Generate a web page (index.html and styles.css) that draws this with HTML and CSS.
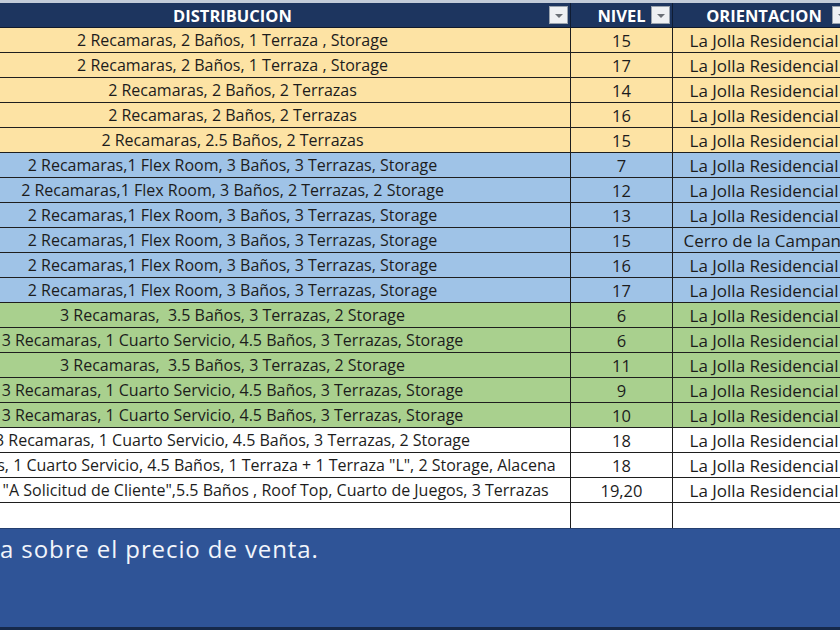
FILE: index.html
```html
<!DOCTYPE html>
<html lang="es">
<head>
<meta charset="utf-8">
<title>Distribucion</title>
<link rel="stylesheet" href="styles.css">
</head>
<body>
<div class="sheet">
  <div class="topline"></div>
  <div class="table">
    <div class="row head">
      <div class="cell c1"><span>DISTRIBUCION</span><i class="dd"></i></div>
      <div class="cell c2"><span>NIVEL</span><i class="dd"></i></div>
      <div class="cell c3"><span>ORIENTACION</span><i class="dd"></i></div>
    </div>
    <div class="row y"><div class="cell c1">2 Recamaras, 2 Baños, 1 Terraza , Storage</div><div class="cell c2">15</div><div class="cell c3">La Jolla Residencial</div></div>
    <div class="row y"><div class="cell c1">2 Recamaras, 2 Baños, 1 Terraza , Storage</div><div class="cell c2">17</div><div class="cell c3">La Jolla Residencial</div></div>
    <div class="row y"><div class="cell c1">2 Recamaras, 2 Baños, 2 Terrazas</div><div class="cell c2">14</div><div class="cell c3">La Jolla Residencial</div></div>
    <div class="row y"><div class="cell c1">2 Recamaras, 2 Baños, 2 Terrazas</div><div class="cell c2">16</div><div class="cell c3">La Jolla Residencial</div></div>
    <div class="row y"><div class="cell c1">2 Recamaras, 2.5 Baños, 2 Terrazas</div><div class="cell c2">15</div><div class="cell c3">La Jolla Residencial</div></div>
    <div class="row b"><div class="cell c1">2 Recamaras,1 Flex Room, 3 Baños, 3 Terrazas, Storage</div><div class="cell c2">7</div><div class="cell c3">La Jolla Residencial</div></div>
    <div class="row b"><div class="cell c1">2 Recamaras,1 Flex Room, 3 Baños, 2 Terrazas, 2 Storage</div><div class="cell c2">12</div><div class="cell c3">La Jolla Residencial</div></div>
    <div class="row b"><div class="cell c1">2 Recamaras,1 Flex Room, 3 Baños, 3 Terrazas, Storage</div><div class="cell c2">13</div><div class="cell c3">La Jolla Residencial</div></div>
    <div class="row b"><div class="cell c1">2 Recamaras,1 Flex Room, 3 Baños, 3 Terrazas, Storage</div><div class="cell c2">15</div><div class="cell c3 nudge">Cerro de la Campana</div></div>
    <div class="row b"><div class="cell c1">2 Recamaras,1 Flex Room, 3 Baños, 3 Terrazas, Storage</div><div class="cell c2">16</div><div class="cell c3">La Jolla Residencial</div></div>
    <div class="row b"><div class="cell c1">2 Recamaras,1 Flex Room, 3 Baños, 3 Terrazas, Storage</div><div class="cell c2">17</div><div class="cell c3">La Jolla Residencial</div></div>
    <div class="row g"><div class="cell c1">3 Recamaras,&nbsp; 3.5 Baños, 3 Terrazas, 2 Storage</div><div class="cell c2">6</div><div class="cell c3">La Jolla Residencial</div></div>
    <div class="row g"><div class="cell c1">3 Recamaras, 1 Cuarto Servicio, 4.5 Baños, 3 Terrazas, Storage</div><div class="cell c2">6</div><div class="cell c3">La Jolla Residencial</div></div>
    <div class="row g"><div class="cell c1">3 Recamaras,&nbsp; 3.5 Baños, 3 Terrazas, 2 Storage</div><div class="cell c2">11</div><div class="cell c3">La Jolla Residencial</div></div>
    <div class="row g"><div class="cell c1">3 Recamaras, 1 Cuarto Servicio, 4.5 Baños, 3 Terrazas, Storage</div><div class="cell c2">9</div><div class="cell c3">La Jolla Residencial</div></div>
    <div class="row g"><div class="cell c1">3 Recamaras, 1 Cuarto Servicio, 4.5 Baños, 3 Terrazas, Storage</div><div class="cell c2">10</div><div class="cell c3">La Jolla Residencial</div></div>
    <div class="row w"><div class="cell c1">3 Recamaras, 1 Cuarto Servicio, 4.5 Baños, 3 Terrazas, 2 Storage</div><div class="cell c2">18</div><div class="cell c3">La Jolla Residencial</div></div>
    <div class="row w"><div class="cell c1">3 Recamaras, 1 Cuarto Servicio, 4.5 Baños, 1 Terraza + 1 Terraza "L", 2 Storage, Alacena</div><div class="cell c2">18</div><div class="cell c3">La Jolla Residencial</div></div>
    <div class="row w"><div class="cell c1">Recamaras "A Solicitud de Cliente",5.5 Baños , Roof Top, Cuarto de Juegos, 3 Terrazas</div><div class="cell c2">19,20</div><div class="cell c3">La Jolla Residencial</div></div>
    <div class="row w empty"><div class="cell c1"></div><div class="cell c2"></div><div class="cell c3"></div></div>
  </div>
  <div class="footer">
    <p class="note">a sobre el precio de venta.</p>
  </div>
</div>
</body>
</html>
```

FILE: styles.css
```css
html, body {
  margin: 0;
  padding: 0;
  background: #ffffff;
}
.sheet {
  width: 840px;
  height: 630px;
  overflow: hidden;
  font-family: "Open Sans", "Noto Sans", sans-serif;
  display: flex;
  flex-direction: column;
}
.topline {
  height: 3px;
  background: #c3ccd9;
  flex: none;
}
.table {
  margin-left: -105px;
  flex: none;
}
.row {
  display: grid;
  grid-template-columns: 676px 102px 182px;
  height: 25px;
  box-sizing: border-box;
  border-bottom: 1px solid #1e1e1e;
}
.cell {
  box-sizing: border-box;
  border-right: 1px solid #1e1e1e;
  display: flex;
  align-items: center;
  justify-content: center;
  white-space: nowrap;
  font-size: 16px;
  color: #1c1c1c;
}
.c2 { font-size: 16.5px; }
.c3 { border-right: none; font-size: 17px; }
.c3.nudge { padding-left: 6px; }
.head {
  background: #1d355f;
  border-bottom: 1px solid #111a2c;
}
.head .cell {
  color: #ffffff;
  font-weight: 700;
  font-size: 16.5px;
  position: relative;
  border-right: 1px solid #0f1c33;
}
.head .c3 { border-right: none; }
.dd {
  position: absolute;
  right: 2px;
  top: 3px;
  width: 19px;
  height: 18px;
  box-sizing: border-box;
  background: #eef0f3;
  border: 1px solid #9aa3ae;
}
.dd::after {
  content: "";
  position: absolute;
  left: 5px;
  top: 7px;
  border-left: 4px solid transparent;
  border-right: 4px solid transparent;
  border-top: 4px solid #6a6f76;
}
.head .c3 .dd { right: 4px; }
.y { background: #fde3a4; }
.b { background: #9fc3e7; }
.g { background: #a9d08e; }
.w { background: #ffffff; }
.empty { border-bottom: none; }
.footer {
  flex: 1;
  background: #2f5497;
  border-top: 1px solid #243f70;
  border-bottom: 3px solid #16294a;
}
.note {
  margin: 3px 0 0 0;
  color: #f2f5fb;
  font-size: 24px;
  letter-spacing: 0.9px;
  white-space: nowrap;
}
```
